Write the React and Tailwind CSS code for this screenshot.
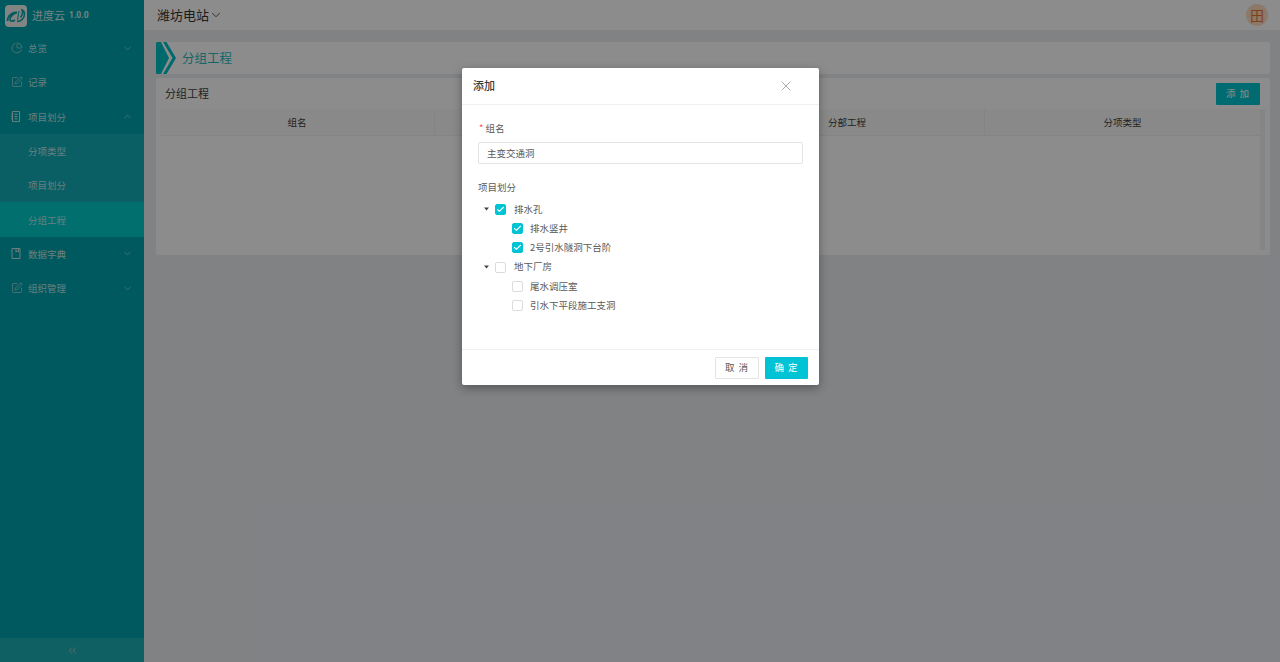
import React from "react";
import { ChevronDown, ChevronUp, ChevronsLeft, X, Check, SquarePen, PieChart } from "lucide-react";

const cjk = { fontFamily: '"Noto Sans CJK SC", "Noto Sans", sans-serif' };

function ListBox() {
  return (
    <svg width="10" height="11" viewBox="0 0 10 11" fill="none" stroke="currentColor" strokeWidth="1">
      <path d="M1.5 .5h7v10h-7zM3.5 3.2h3M3.5 5.5h3M3.5 7.8h3M.2 3.2h1.3M.2 5.500h1.3M.2 7.8h1.3" />
    </svg>
  );
}

function Book() {
  return (
    <svg width="10" height="11" viewBox="0 0 10 11" fill="none" stroke="currentColor" strokeWidth="1">
      <path d="M1 .5h8v10h-8zM5 .5v3.500l1.200-1 1.200 1V.5" />
    </svg>
  );
}

function NavItem({ icon, label, arrow, sub, active }) {
  return (
    <div className={`h-[34.3px] flex items-center text-[9.5px] text-[#bfe5e7] ${sub ? "pl-7" : "pl-[11px]"} pr-[11px] ${active ? "bg-[#00cbc9]" : sub ? "bg-[#12adb7]" : ""}`}>
      {!sub && <span className="w-[17px] shrink-0 flex items-center">{icon}</span>}
      <span className="flex-1">{label}</span>
      {arrow === "down" && <ChevronDown size={11} strokeWidth={1.3} />}
      {arrow === "up" && <ChevronUp size={11} strokeWidth={1.3} />}
    </div>
  );
}

function Box({ checked }) {
  return (
    <span className={`w-[11px] h-[11px] shrink-0 mt-[1px] rounded-[2px] border flex items-center justify-center ${checked ? "bg-[#00c3d5] border-[#00c3d5]" : "bg-white border-[#dcdcdc]"}`}>
      {checked && <Check size={9} strokeWidth={3} className="text-white" />}
    </span>
  );
}

function TreeRow({ label, checked, parent }) {
  return (
    <div className={`h-[19.3px] flex items-center text-[9.5px] text-[#595959] ${parent ? "pl-[6px]" : "pl-[34px]"}`}>
      {parent && (
        <svg width="5" height="4" viewBox="0 0 5 4" className="mr-[6px] shrink-0">
          <path d="M0 .5h5L2.500 3.500z" fill="#444" />
        </svg>
      )}
      <Box checked={checked} />
      <span className={parent ? "ml-[8px]" : "ml-[7px]"}>{label}</span>
    </div>
  );
}

export default function App() {
  return (
    <div className="relative w-[1280px] h-[662px] flex overflow-hidden bg-[#e9edf1]" style={cjk}>
      <aside className="w-[144px] shrink-0 bg-[#00a3ab] flex flex-col text-white">
        <div className="h-[31px] flex items-center pl-[5px]">
          <span className="w-[22px] h-[22px] rounded-[4px] bg-[#eef3f3] flex items-center justify-center">
            <svg width="20" height="16" viewBox="0 0 20 16" fill="none" stroke="#0aa5ad">
              <path d="M1.500 13C1.500 8 6 4 11 4.500 8 5 3.500 8.500 4 12c.5 1.500 3 1.500 5 0" strokeWidth="1.800" />
              <path d="M11 13.500c4 0 7.500-3 7.500-7.500 0-2-1-3.500-2.500-4 .8 2 .5 5-1.500 7.500" strokeWidth="1.600" />
              <path d="M13 3l-1.500 9" strokeWidth="1" />
            </svg>
          </span>
          <span className="ml-[5px] text-[11px] text-[#d5eff0]">进度云</span>
          <span className="ml-[4px] text-[8.5px] font-bold text-[#d5eff0]" style={{ fontFamily: '"Roboto", sans-serif' }}>1.0.0</span>
        </div>
        <NavItem icon={<PieChart size={12} strokeWidth={1.3} />} label="总览" arrow="down" />
        <NavItem icon={<SquarePen size={12} strokeWidth={1.3} />} label="记录" />
        <NavItem icon={<ListBox />} label="项目划分" arrow="up" />
        <NavItem sub label="分项类型" />
        <NavItem sub label="项目划分" />
        <NavItem sub active label="分组工程" />
        <NavItem icon={<Book />} label="数据字典" arrow="down" />
        <NavItem icon={<SquarePen size={12} strokeWidth={1.3} />} label="组织管理" arrow="down" />
        <div className="mt-auto h-[24px] bg-[#1bafb5] flex items-center justify-center text-[#7cb8bb]">
          <ChevronsLeft size={13} strokeWidth={2} />
        </div>
      </aside>

      <main className="flex-1 min-w-0 flex flex-col">
        <header className="h-[30px] shrink-0 bg-white flex items-center justify-between pl-[13px] pr-[12px]">
          <div className="flex items-center text-[13px] text-[#333]">
            <span>潍坊电站</span>
            <ChevronDown size={14} strokeWidth={1.4} />
          </div>
          <span className="w-[22px] h-[22px] rounded-full bg-[#ffdcc0] text-[#e8762a] text-[14px] leading-none flex items-center justify-center">田</span>
        </header>

        <div className="flex-1 pt-[12px] pl-[12px] pr-[10px] flex flex-col gap-[4px]">
          <div className="h-[32px] bg-white rounded-[2px] flex items-center">
            <svg width="20" height="32" viewBox="0 0 20 32" className="shrink-0">
              <path d="M1.500 0H5l8 16-8 16H1.500C.5 32 0 31.500 0 30.500V1.500C0 .5 .5 0 1.500 0z" fill="#00c0c4" />
              <path d="M7 0h3.500L20 16l-9.500 16H7l9.500-16z" fill="#00c0c4" />
            </svg>
            <span className="ml-[6px] text-[12.5px] text-[#1fbcc2]">分组工程</span>
          </div>

          <section className="h-[177px] bg-white rounded-[2px] flex flex-col pl-[4px] pr-[5px] pb-[5px]">
            <div className="h-[31px] shrink-0 flex items-center justify-between pl-[5px] pr-[5px]">
              <span className="text-[11px] text-[#404040]">分组工程</span>
              <button className="w-[44px] h-[22px] bg-[#00c4cc] rounded-[1px] text-white text-[9.5px] tracking-[1px]">添 加</button>
            </div>
            <div className="flex-1 flex min-h-0">
              <div className="flex-1 flex flex-col">
                <div className="h-[27px] grid grid-cols-4 bg-[#f9f9f9] border-b border-[#f0f0f0] text-[9.5px] text-[#404040] text-center leading-[27px]">
                  <span className="border-r border-[#f0f0f0]">组名</span>
                  <span className="border-r border-[#f0f0f0]"></span>
                  <span className="border-r border-[#f0f0f0]">分部工程</span>
                  <span>分项类型</span>
                </div>
                <div className="flex-1 bg-white"></div>
              </div>
              <div className="w-[5px] bg-[#f3f3f3]"></div>
            </div>
          </section>
        </div>
      </main>

      <div className="absolute inset-0 bg-black/45"></div>

      <div className="absolute left-[462px] top-[68px] w-[357px] h-[317px] bg-white rounded-[2px] shadow-[0_3px_10px_rgba(0,0,0,0.35)] flex flex-col">
        <div className="h-[37px] shrink-0 border-b border-[#f0f0f0] flex items-center justify-between pl-[11px] pr-[25px]">
          <span className="text-[11px] font-medium text-[#3a3a3a] -mt-[2px]">添加</span>
          <X size={16} strokeWidth={1} className="text-[#808080]" />
        </div>

        <div className="flex-1 pt-[16px] px-[16px]">
          <div className="h-[14px] flex items-center text-[9.5px] text-[#595959]">
            <span className="text-[#ff4d4f] mr-[2px] ml-[1px]">*</span>
            <span>组名</span>
          </div>
          <div className="mt-[7px] h-[22px] w-[325px] border border-[#e4e4e4] rounded-[2px] flex items-center pl-[8px] text-[9.5px] text-[#595959]">
            主变交通洞
          </div>
          <div className="mt-[16px] h-[14px] flex items-center text-[9.5px] text-[#595959]">项目划分</div>
          <div className="mt-[5px]">
            <TreeRow parent checked label="排水孔" />
            <TreeRow checked label="排水竖井" />
            <TreeRow checked label="2号引水隧洞下台阶" />
            <TreeRow parent label="地下厂房" />
            <TreeRow label="尾水调压室" />
            <TreeRow label="引水下平段施工支洞" />
          </div>
        </div>

        <div className="h-[36px] shrink-0 border-t border-[#f0f0f0] flex items-center justify-end gap-[6px] pr-[11px]">
          <button className="w-[44px] h-[22px] border border-[#e4e4e4] rounded-[1px] bg-white text-[9.5px] tracking-[1px] text-[#595959]">取 消</button>
          <button className="w-[43px] h-[22px] bg-[#00c3d5] rounded-[1px] text-[9.5px] tracking-[1px] text-white">确 定</button>
        </div>
      </div>
    </div>
  );
}
